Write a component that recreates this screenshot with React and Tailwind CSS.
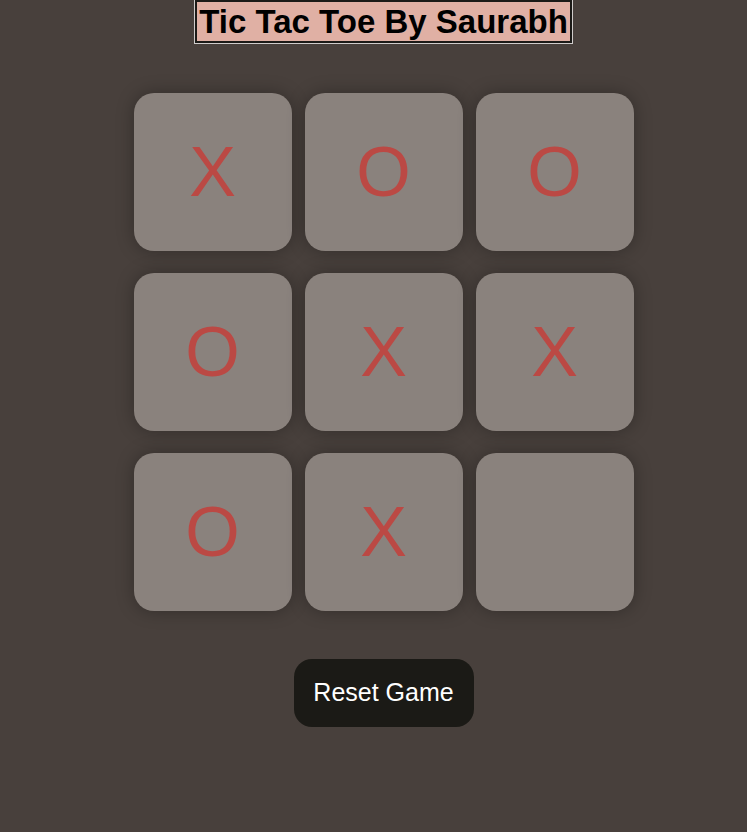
import { useState } from "react";

const start = ["X", "O", "O", "O", "X", "X", "O", "X", ""];

export default function App() {
  const [board, setBoard] = useState(start);
  const [turn, setTurn] = useState("O");

  function play(i) {
    if (board[i]) return;
    const next = [...board];
    next[i] = turn;
    setBoard(next);
    setTurn(turn === "X" ? "O" : "X");
  }

  return (
    <div className="min-h-[832px] bg-[#48403c] pl-5 font-['Liberation_Sans',Arial,sans-serif]">
      <div className="flex flex-col items-center">
        <h1 className="border-2 border-[#1b1a17] bg-[#e0b0a4] px-[2px] text-[33px] leading-[39px] font-bold text-black outline outline-1 outline-[#cfcccb]">
          Tic Tac Toe By Saurabh
        </h1>

        <div className="mt-[50px] grid grid-cols-[158px_158px_158px] gap-x-[13px] gap-y-[22px]">
          {board.map((cell, i) => (
            <button
              key={i}
              type="button"
              onClick={() => play(i)}
              className="flex h-[158px] w-[158px] items-center justify-center rounded-[20px] bg-[#8a827d] text-[70px] leading-none text-[#bb4944] shadow-[0_0_18px_rgba(0,0,0,0.3)]"
            >
              {cell}
            </button>
          ))}
        </div>

        <button
          type="button"
          onClick={() => {
            setBoard(Array(9).fill(""));
            setTurn("X");
          }}
          className="mt-[48px] h-[68px] w-[180px] rounded-[18px] bg-[#1b1a16] text-[25px] text-white"
        >
          Reset Game
        </button>
      </div>
    </div>
  );
}
